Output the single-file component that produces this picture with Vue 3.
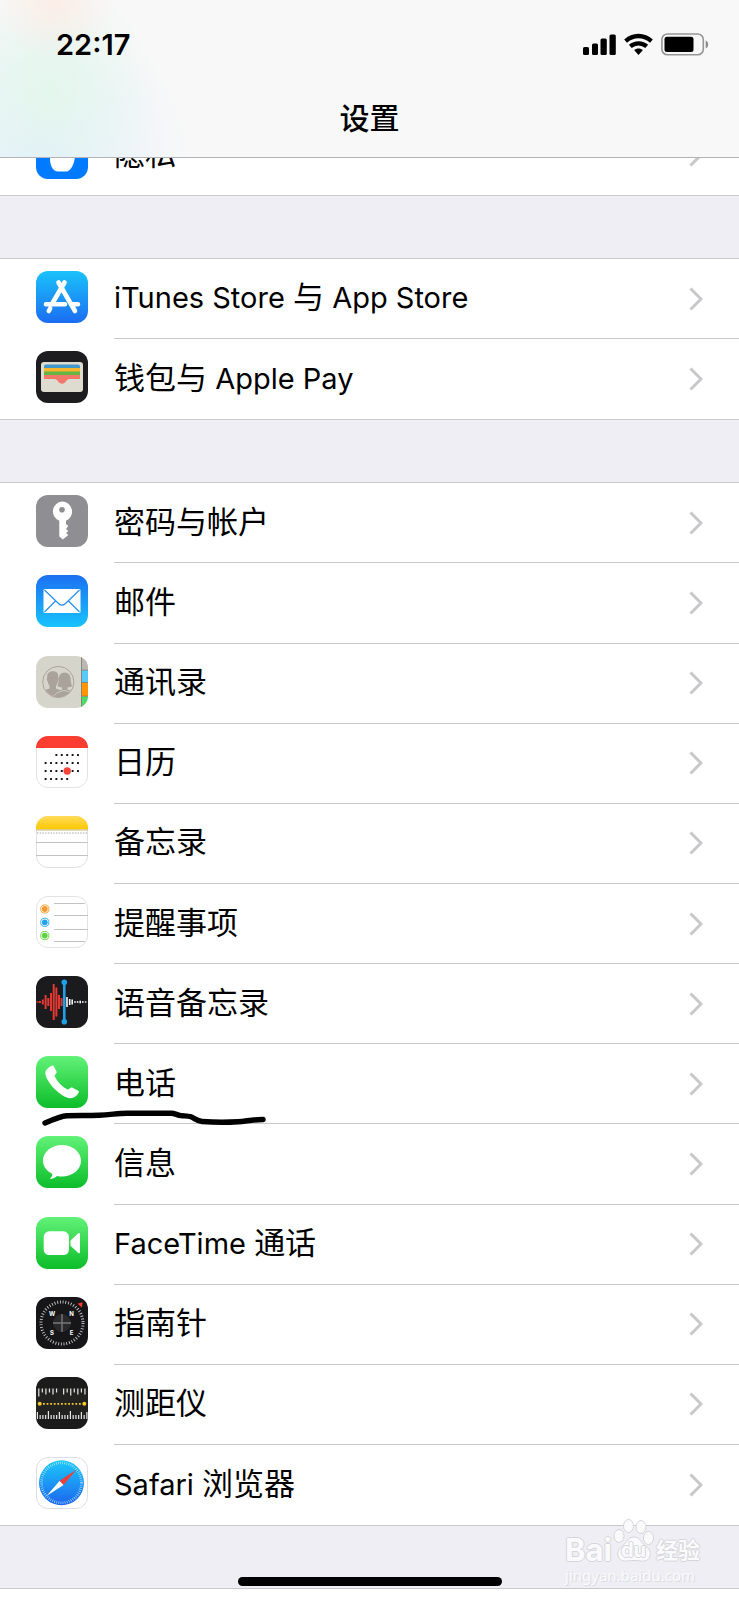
<script setup>
// Latin runs are set slightly smaller than the Chinese characters beside them
const runs = (label) =>
  label.match(/[\u4e00-\u9fff]+|[^\u4e00-\u9fff]+/g).map((text) => ({
    text,
    latin: !/[\u4e00-\u9fff]/.test(text),
  }))

const groups = [
  { name: 'privacy', rows: [{ icon: 'privacy', label: '隐私' }] },
  {
    name: 'store',
    rows: [
      { icon: 'appstore', label: 'iTunes Store 与 App Store' },
      { icon: 'wallet', label: '钱包与 Apple Pay' },
    ],
  },
  {
    name: 'apps',
    rows: [
      { icon: 'key', label: '密码与帐户' },
      { icon: 'mail', label: '邮件' },
      { icon: 'contacts', label: '通讯录' },
      { icon: 'calendar', label: '日历' },
      { icon: 'notes', label: '备忘录' },
      { icon: 'reminders', label: '提醒事项' },
      { icon: 'voice', label: '语音备忘录' },
      { icon: 'phone', label: '电话', marked: true },
      { icon: 'messages', label: '信息' },
      { icon: 'facetime', label: 'FaceTime 通话' },
      { icon: 'compass', label: '指南针' },
      { icon: 'measure', label: '测距仪' },
      { icon: 'safari', label: 'Safari 浏览器' },
    ],
  },
]

// Voice memo waveform: [x, height]
const redBars = [[1.5, 1.4], [4, 2], [6.8, 5], [9.6, 14], [12.3, 8], [15, 18], [17.7, 36], [20.4, 29], [23, 14], [25.6, 8]]
const whiteBars = [[31, 10], [33.7, 6], [36.2, 5], [39, 1.6], [41.6, 1.6], [44.2, 2.6], [46.8, 1.6], [49.6, 1.4]]

// Calendar dots: [first column, last column] for each line
const dotLines = [[2, 6], [0, 6], [0, 6], [0, 4]]
const calendarDots = dotLines.flatMap(([from, to], line) =>
  Array.from({ length: to - from + 1 }, (_, i) => ({ x: 9.6 + (from + i) * 5.4, y: 19 + line * 8 })))

const topTicks = [8, 4, 6, 4, 6, 4, 0, 6, 4, 7, 4, 6, 4, 6]
const bottomTicks = [7, 4, 4, 4, 8, 4, 4, 4, 7, 4, 4, 4, 8, 4, 4, 4, 7, 4, 7]
</script>

<template>
  <main class="screen">
    <header class="top">
      <div class="status">
        <time class="clock">22:17</time>
        <svg class="indicators" viewBox="0 0 128 24" aria-label="信号、无线网络、电池">
          <g fill="#000">
            <rect x="1" y="14" width="6" height="8" rx="1.500" />
            <rect x="10" y="10.500" width="6" height="11.500" rx="1.500" />
            <rect x="18.500" y="5.500" width="6.300" height="16.500" rx="1.500" />
            <rect x="27.500" y="1.500" width="6.300" height="20.500" rx="1.500" />
            <path transform="translate(4.500 0)" d="M52 .8c5.400 0 10.400 2.100 14.300 5.800l-2.800 3.100a16.900 16.900 0 0 0-23 0l-2.800-3.100A20.800 20.800 0 0 1 52 .8zM52 8.200c3.700 0 7 1.400 9.600 3.600l-2.800 3.200a10.400 10.400 0 0 0-13.600 0l-2.800-3.200A14.700 14.700 0 0 1 52 8.200zM52 15.600c1.700 0 3.200.6 4.400 1.500L52 22l-4.400-4.900c1.200-.9 2.700-1.500 4.400-1.500z" />
            <rect x="82.500" y="3.700" width="29" height="15.300" rx="2.500" />
          </g>
          <rect x="79.900" y="1" width="41.400" height="20.700" rx="5.500" fill="none" stroke="#969696" stroke-width="1.600" />
          <path d="M123.700 7.500c3.300 1.300 3.300 6.700 0 8z" fill="#8c8c8c" />
        </svg>
      </div>
      <h1 class="title">设置</h1>
    </header>

    <template v-for="group in groups" :key="group.name">
      <nav class="group" :class="group.name">
        <a v-for="row in group.rows" :key="row.icon" class="row" href="#">
          <svg class="icon" viewBox="0 0 52 52" aria-hidden="true">
            <g v-if="row.icon === 'privacy'">
              <rect width="52" height="52" rx="12" fill="#007aff" />
              <path d="M14 12h25v18c-1 7-4 14.500-9 14.500h-8c-5 0-8-6-8-12.500z" fill="#fff" />
            </g>

            <g v-else-if="row.icon === 'appstore'">
              <defs>
                <linearGradient id="storeFill" x1="0" y1="0" x2="0" y2="1">
                  <stop offset="0" stop-color="#1bc2fb" /><stop offset="1" stop-color="#1b6df2" />
                </linearGradient>
              </defs>
              <rect width="52" height="52" rx="12" fill="url(#storeFill)" />
              <path d="M28.500 11.500 16 33M22.500 11.500 39 40M14.200 37.500 12.800 40M10 33.200h19M37 33.200h5" stroke="#fff" stroke-width="4.600" stroke-linecap="round" fill="none" />
            </g>

            <g v-else-if="row.icon === 'wallet'">
              <rect width="52" height="52" rx="12" fill="#1d1d1f" />
              <rect x="5" y="11" width="42" height="30" rx="3" fill="#dedbd1" />
              <path d="M8 17v-1.500a2 2 0 0 1 2-2h32a2 2 0 0 1 2 2V17z" fill="#4398cb" />
              <path d="M8 17h36v4H8z" fill="#f8b42a" />
              <path d="M8 20.500h36v3.800H8z" fill="#65b444" />
              <path d="M8 24h36v4H33.500c-3.500 0-3.700 4.800-7.500 4.800S22 28 18.500 28H8z" fill="#f3786a" />
            </g>

            <g v-else-if="row.icon === 'key'">
              <rect width="52" height="52" rx="12" fill="#8e8e93" />
              <path fill-rule="evenodd" d="M26 6.500a10 10 0 0 1 4 19.200V29l2.300 2-2.300 3 2.300 2-2.300 2 2.300 2-5.500 4.500-3.500-3V25.800A10 10 0 0 1 26 6.500zm0 5.500a2.800 2.800 0 1 0 0 5.600 2.800 2.800 0 0 0 0-5.600z" fill="#fff" />
            </g>

            <g v-else-if="row.icon === 'mail'">
              <defs>
                <linearGradient id="mailFill" x1="0" y1="0" x2="0" y2="1">
                  <stop offset="0" stop-color="#1c70f2" /><stop offset="1" stop-color="#18c3fc" />
                </linearGradient>
              </defs>
              <rect width="52" height="52" rx="12" fill="url(#mailFill)" />
              <rect x="7.500" y="14" width="37" height="24" rx="1.500" fill="#fff" />
              <path d="m8.500 15 14 13.500c2.300 2.200 4.700 2.200 7 0l14-13.500M8.500 37 19.500 26M43.500 37 32.500 26" fill="none" stroke="#278ef0" stroke-width="1.200" />
            </g>

            <g v-else-if="row.icon === 'contacts'">
              <defs>
                <clipPath id="contactsClip"><rect width="52" height="52" rx="12" /></clipPath>
                <clipPath id="peopleClip"><circle cx="22.300" cy="26" r="15" /></clipPath>
              </defs>
              <g clip-path="url(#contactsClip)">
                <rect width="52" height="52" fill="#d6d5cb" />
                <path d="M45.500 0H52v13.500h-6.500z" fill="#b9b8b2" />
                <path d="M45.500 14H52v12.500h-6.500z" fill="#5ac8fa" />
                <path d="M45.500 26.500H52v13.500h-6.500z" fill="#ff9500" />
                <path d="M45.500 40.500H52V52h-6.500z" fill="#4cd964" />
                <path d="M45.500 0v52M45.500 14H52M45.500 26.500H52M45.500 40.200H52" stroke="#77776c" stroke-width=".8" />
                <circle cx="22.300" cy="26" r="15.600" fill="none" stroke="#aaa39c" stroke-width="1" />
                <g clip-path="url(#peopleClip)" fill="#aaa39c">
                  <path d="M28.500 16.500c4.200 0 6 3 6.200 7 .2 3 .8 4.500 1.300 6.500-1.500 1-3 1.300-4.500 1.500v2c3 1 6 2 8 5v5H18V36l8-2.500v-2c-1.600-.2-3.100-.5-4.600-1.500.6-2 1.200-3.500 1.300-6.500.2-4 1.800-7 5.800-7z" />
                  <path d="M17 15.300c4.200 0 5.700 2.700 5.300 6.500.8.500.4 3-.5 3.600-.3 2-.9 3.200-1.800 4.200v3c3 1.500 8 2 9 7v6H3v-8c1.500-3 8-3.500 10.500-5v-3c-.9-1-1.500-2.200-1.800-4.200-.9-.6-1.300-3.100-.5-3.600-.4-3.800 1.500-6.500 5.800-6.500z" />
                  <path d="M28 34.500c-7 1.500-10 4-11 8h20v-5c-3-2-6-2.500-9-3z" stroke="#d6d5cb" stroke-width=".8" />
                </g>
              </g>
            </g>

            <g v-else-if="row.icon === 'calendar'">
              <rect x=".5" y=".5" width="51" height="51" rx="11.500" fill="#fff" stroke="#e3e3e3" />
              <path d="M0 12A12 12 0 0 1 12 0h28a12 12 0 0 1 12 12z" fill="#fc3d31" />
              <rect v-for="(dot, i) in calendarDots" :key="i" :x="dot.x - 1" :y="dot.y - 1" width="2" height="2" rx=".5" fill="#161616" />
              <circle cx="31.200" cy="35" r="3.700" fill="#f84338" />
            </g>

            <g v-else-if="row.icon === 'notes'">
              <defs>
                <linearGradient id="notesFill" x1="0" y1="0" x2="0" y2="1">
                  <stop offset="0" stop-color="#ffdb5b" /><stop offset="1" stop-color="#fdc800" />
                </linearGradient>
              </defs>
              <rect x=".5" y=".5" width="51" height="51" rx="11.500" fill="#fff" stroke="#e0e0e0" />
              <path d="M0 13.500V12A12 12 0 0 1 12 0h28a12 12 0 0 1 12 12v1.500z" fill="url(#notesFill)" />
              <path d="M0 14h52" stroke="#c7b988" />
              <path d="M1 17h50" stroke="#aaa" stroke-width="1.200" stroke-dasharray="1.500 1.200" />
              <path d="M0 26.500h52M0 39.500h52" stroke="#c2c1c6" />
            </g>

            <g v-else-if="row.icon === 'reminders'">
              <rect x=".5" y=".5" width="51" height="51" rx="11.500" fill="#fff" stroke="#e3e3e3" />
              <path d="M18 7.500h31M18 19.500h34M18 33.500h34M18 45.500h31" stroke="#c2c1c6" />
              <g v-for="(tone, i) in ['#f79a2d', '#1fa4ed', '#60d140']" :key="tone">
                <circle cx="8.800" :cy="13 + i * 13.300" r="4.100" fill="#fff" :stroke="tone" stroke-width=".9" />
                <circle cx="8.800" :cy="13 + i * 13.300" r="2.900" :fill="tone" />
              </g>
            </g>

            <g v-else-if="row.icon === 'voice'">
              <rect width="52" height="52" rx="12" fill="#1b1b1d" />
              <rect v-for="bar in redBars" :key="bar[0]" :x="bar[0] - 1" :y="26 - bar[1] / 2" width="2" :height="bar[1]" fill="#e23a33" />
              <rect v-for="bar in whiteBars" :key="bar[0]" :x="bar[0] - .8" :y="26 - bar[1] / 2" width="1.600" :height="bar[1]" fill="#f4f4f4" />
              <path d="M28.300 6v40" stroke="#20a0e8" stroke-width="2.600" />
              <circle cx="28.300" cy="6.200" r="2.800" fill="#20a0e8" />
              <circle cx="28.300" cy="45.800" r="2.800" fill="#20a0e8" />
            </g>

            <g v-else-if="row.icon === 'phone'">
              <defs>
                <linearGradient id="greenFill" x1="0" y1="0" x2="0" y2="1">
                  <stop offset="0" stop-color="#62f278" /><stop offset="1" stop-color="#0cbd29" />
                </linearGradient>
              </defs>
              <rect width="52" height="52" rx="12" fill="url(#greenFill)" />
              <path d="M15.600 9.800c1-.7 1.700-.4 2.300.7l2.300 4.200c.7 1.300.5 2.200-.4 3.200-1 1-1.500 1.600-.9 2.900 2.300 4.900 7 9.600 11.800 12.300 1.300.7 2 .3 3-.7s2-1.200 3.300-.5l4.800 2.700c1.200.7 1.300 1.500.6 2.500-2 3.300-4.600 5.400-8.400 5.200C25 41.700 9.500 25.600 9.400 17.300c0-3.400 2.600-5.500 6.200-7.500z" fill="#fff" />
            </g>

            <g v-else-if="row.icon === 'messages'">
              <rect width="52" height="52" rx="12" fill="url(#greenFill)" />
              <path d="M26 9c10.600 0 19 7 19 15.800s-8.400 15.700-19 15.700c-1.700 0-3.400-.2-5-.6-1.800 1.600-4.500 3-7.300 3.200 1.500-1.400 2.600-3.200 2.700-5.100C10.800 35.300 7 30.600 7 24.800 7 16 15.400 9 26 9z" fill="#fff" />
            </g>

            <g v-else-if="row.icon === 'facetime'">
              <rect width="52" height="52" rx="12" fill="url(#greenFill)" />
              <rect x="7.700" y="14.300" width="25.300" height="23.700" rx="5.500" fill="#fff" />
              <path d="m34.500 23.500 7.500-7c1-.9 2-.6 2 .8V35c0 1.400-1 1.700-2 .8l-7.500-7z" fill="#fff" />
            </g>

            <g v-else-if="row.icon === 'compass'">
              <rect width="52" height="52" rx="12" fill="#161618" />
              <circle cx="26" cy="26" r="21" fill="none" stroke="#c9c9c9" stroke-width="3" stroke-dasharray=".9 1.850" />
              <circle cx="26" cy="26" r="9" fill="#29292b" />
              <path d="M26 17v18M17 26h18" stroke="#77777a" stroke-width="1.400" />
              <g class="points" fill="#fff" text-anchor="middle">
                <text x="16" y="19">W</text><text x="35.500" y="19">N</text>
                <text x="16" y="38">S</text><text x="35.500" y="38">E</text>
              </g>
              <path d="m41.500 6.800 5-1.600-.5 5.300z" fill="#ff3b30" />
            </g>

            <g v-else-if="row.icon === 'measure'">
              <rect width="52" height="52" rx="12" fill="#1b1b1c" />
              <path d="M0 11h52v31H0z" fill="#222221" />
              <template v-for="(tick, i) in topTicks" :key="'t' + i">
                <rect v-if="tick" :x="2.200 + i * 3.550" y="11.500" width="1.200" :height="tick" fill="#e6e6e6" />
              </template>
              <rect v-for="(tick, i) in bottomTicks" :key="'b' + i" :x=".8 + i * 2.750" :y="42 - tick" width="1.200" :height="tick" fill="#e6e6e6" />
              <path d="M7 26.800h38" stroke="#f7c927" stroke-width="1.800" stroke-dasharray="1.800 1.800" />
              <circle cx="3.700" cy="26.800" r="2" fill="#f7c927" />
              <circle cx="48.300" cy="26.800" r="2" fill="#f7c927" />
            </g>

            <g v-else-if="row.icon === 'safari'">
              <defs>
                <linearGradient id="safariFill" x1="0" y1="0" x2="0" y2="1">
                  <stop offset="0" stop-color="#1bc9fb" /><stop offset="1" stop-color="#1d65ee" />
                </linearGradient>
              </defs>
              <rect x=".5" y=".5" width="51" height="51" rx="11.500" fill="#fff" stroke="#dedee6" />
              <circle cx="25.500" cy="25.800" r="22.500" fill="url(#safariFill)" />
              <circle cx="25.500" cy="25.800" r="20" fill="none" stroke="#c4ebff" stroke-width="2.600" stroke-dasharray=".6 1.500" />
              <path d="M40.500 12.500 23.500 24l4 4z" fill="#f13f38" />
              <path d="M10.500 39 23.500 24l4 4z" fill="#fff" />
            </g>
          </svg>

          <span class="body">
            <span class="label"><span v-for="run in runs(row.label)" :key="run.text" :class="{ latin: run.latin }">{{ run.text }}</span></span>
            <svg class="chevron" viewBox="0 0 14 24" aria-hidden="true">
              <path d="m1.500 1.500 10.500 10.500L1.500 22.500" fill="none" stroke="#c7c7cc" stroke-width="3" />
            </svg>
          </span>

          <svg v-if="row.marked" class="scribble" viewBox="0 0 228 18" aria-hidden="true">
            <path d="M4 13C13 9 20 6 26 5.700c14-.3 20-.1 32-.5s18-2 28-2h44c4 0 6 2 10 2.400s7 .2 10 1.200c4 1.500 6 4.200 11 4.700 10 .8 28 .8 36 .3 8-.4 14-2.400 25-2.300" fill="none" stroke="#000" stroke-width="5.400" stroke-linecap="round" stroke-linejoin="round" />
          </svg>
        </a>
      </nav>
      <div class="gap"></div>
    </template>

    <div class="next-group"></div>

    <div class="watermark">
      <div class="brand">
        <span>Bai</span>
        <span class="paw">
          <svg viewBox="0 0 42 44" aria-hidden="true">
            <g fill="#fafafc" stroke="#d6d6da">
              <ellipse cx="6" cy="18" rx="5" ry="6.500" /><ellipse cx="15.500" cy="8" rx="5" ry="6.500" />
              <ellipse cx="28" cy="9" rx="5" ry="6.500" /><ellipse cx="35.500" cy="20" rx="5" ry="6.500" />
              <path d="M21 19c5 0 7 5 11 8.500 4 3 6 6 5 10-1 5-5 6-9 5.500-5-.7-9-.7-14 0-4 .5-8-1-9-5.500-.8-4 1-7 5-10C14 24 16 19 21 19z" />
            </g>
          </svg>
          <span class="du">du</span>
        </span>
        <span class="jy">经验</span>
      </div>
      <div class="site">jingyan.baidu.com</div>
    </div>
    <div class="home-bar"></div>
  </main>
</template>

<style>
body {
  margin: 0;
  background: #fff;
}
</style>

<style scoped>
.screen {
  position: relative;
  display: flex;
  flex-direction: column;
  min-height: 100vh;
  overflow: hidden;
  background: #fff;
  color: #000;
  font-family: Inter, "Noto Sans CJK SC", sans-serif;
}

.top {
  display: flex;
  flex-direction: column;
  flex: none;
  border-bottom: 1px solid #b4b4b8;
  background:
    radial-gradient(circle at 55px 0, rgba(255, 232, 224, 0.7), transparent 60px),
    radial-gradient(circle at 50px 90px, rgba(226, 247, 234, 0.9), transparent 110px),
    radial-gradient(circle at 40px 158px, rgba(226, 239, 253, 1), transparent 150px),
    #f8f8f8;
}

.status {
  display: flex;
  align-items: center;
  justify-content: space-between;
  height: 89px;
  padding: 0 29px 0 56px;
}

.clock {
  font-size: 29px;
  font-weight: 600;
}

.indicators {
  width: 128px;
  height: 24px;
}

.title {
  margin: 0 0 10px;
  font-size: 30px;
  line-height: 58px;
  font-weight: 500;
  text-align: center;
}

.group {
  display: flex;
  flex-direction: column;
}

.privacy {
  flex: none;
  height: 37px;
  justify-content: flex-end;
  overflow: hidden;
}

.store {
  flex: 2 0 0;
}

.apps {
  flex: 13 0 0;
}

.row {
  position: relative;
  display: flex;
  align-items: center;
  flex: 1 0 80px;
  gap: 26px;
  padding-left: 36px;
  color: inherit;
  text-decoration: none;
}

.privacy .row {
  flex: none;
}

.privacy .row,
.privacy .body {
  min-height: 80px;
}

.gap {
  flex: none;
  height: 62px;
  border-top: 1px solid #c8c7cc;
  border-bottom: 1px solid #c8c7cc;
  background: #efeef4;
}

.icon {
  flex: none;
  width: 52px;
  height: 52px;
  margin-bottom: 4px;
}

.body {
  display: flex;
  flex: 1;
  align-items: center;
  align-self: stretch;
  justify-content: space-between;
  padding-right: 36px;
  border-bottom: 1px solid #c8c7cc;
}

.row:last-child .body {
  border-bottom: 0;
}

.label {
  margin-bottom: 2px;
  font-size: 31px;
  line-height: 44px;
}

.latin {
  font-size: 29px;
}

.chevron {
  flex: none;
  width: 14px;
  height: 24px;
}

.points {
  font-size: 6px;
  font-weight: 700;
}

.scribble {
  position: absolute;
  left: 41px;
  bottom: -4px;
  z-index: 1;
  width: 228px;
  height: 18px;
}

.next-group {
  flex: none;
  height: 11px;
}

.watermark {
  position: absolute;
  right: 39px;
  bottom: 15px;
  color: #fafafc;
}

.brand {
  display: flex;
  align-items: flex-end;
  gap: 1px;
  font-size: 31px;
  line-height: 30px;
  font-weight: 700;
  text-shadow: 1px 0 #d6d6da, -1px 0 #d6d6da, 0 1px #d6d6da, 0 -1px #d6d6da;
}

.paw {
  position: relative;
  display: block;
  width: 42px;
  height: 44px;
  margin-bottom: 3px;
}

.paw svg {
  display: block;
  width: 100%;
  height: 100%;
}

.du {
  position: absolute;
  left: 8px;
  bottom: 2px;
  font-size: 20px;
  line-height: 20px;
}

.jy {
  font-size: 22px;
}

.site {
  font-family: "Noto Sans", sans-serif;
  font-size: 15px;
  line-height: 20px;
  text-shadow: 1px 1px #dcdce2;
}

.home-bar {
  position: absolute;
  left: 50%;
  bottom: 14px;
  width: 264px;
  height: 9px;
  margin-left: -132px;
  border-radius: 5px;
  background: #000;
}
</style>
